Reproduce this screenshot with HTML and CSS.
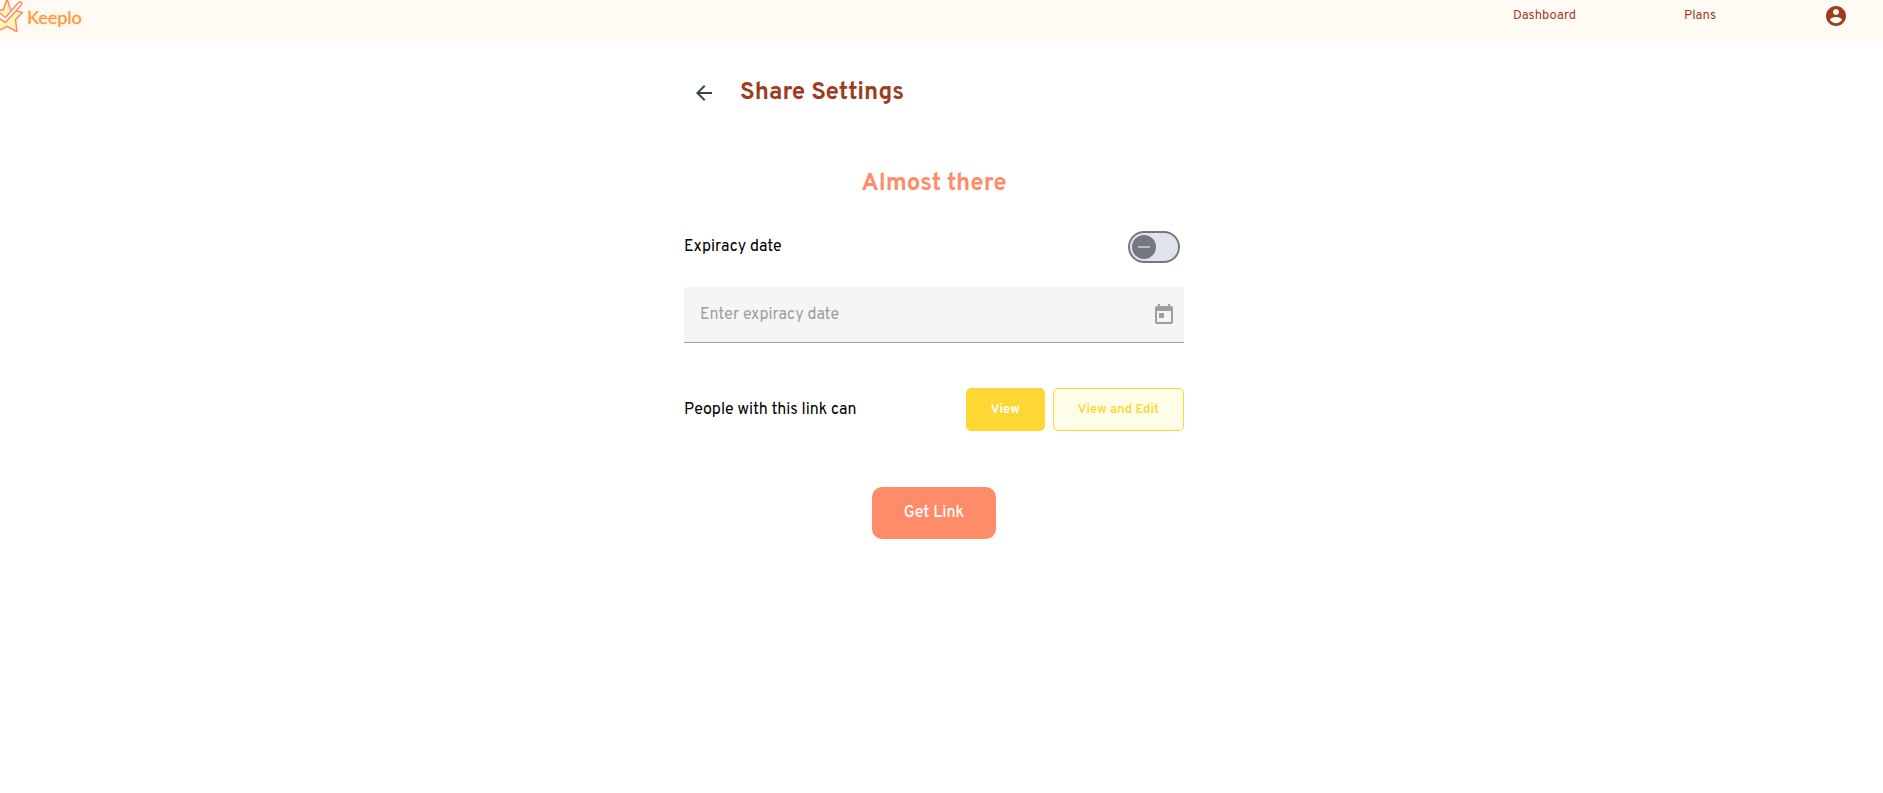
FILE: index.html
```html
<!DOCTYPE html>
<html lang="en">
<head>
<meta charset="utf-8">
<title>Keeplo - Share Settings</title>
<link rel="stylesheet" href="styles.css">
</head>
<body>
<header class="topbar">
  <a class="brand" href="#" aria-label="Keeplo home">
    <svg class="brand-mark" viewBox="0 0 24 34" width="24" height="34" aria-hidden="true">
      <path class="star" d="M7-1L10.500 9.500 22.500 12.500 15.500 19.500 17 31.500 7 26.500-3 31.500-1 20-8 12.500 3.500 9.500z"/>
      <path class="tick" d="M-3 13.500L.5 13.500 5.500 17.500 18.500 2.500Q20.500 1 21.500 2.500T20.500 6L5.500 22.500-3 17"/>
    </svg>
    <span class="brand-name">Keeplo</span>
  </a>
  <nav class="nav">
    <a class="nav-link" href="#">Dashboard</a>
    <a class="nav-link" href="#">Plans</a>
    <button class="account" type="button" aria-label="Account">
      <svg viewBox="0 0 24 24" width="24" height="24"><path d="M12 2C6.480 2 2 6.480 2 12s4.480 10 10 10 10-4.480 10-10S17.520 2 12 2zm0 3c1.660 0 3 1.340 3 3s-1.340 3-3 3-3-1.340-3-3 1.340-3 3-3zm0 14.200c-2.500 0-4.710-1.280-6-3.220.030-1.990 4-3.080 6-3.080 1.990 0 5.970 1.090 6 3.080-1.290 1.940-3.500 3.220-6 3.220z"/></svg>
    </button>
  </nav>
</header>
<main class="page">
  <div class="panel">
    <div class="title-row">
      <button class="back" type="button" aria-label="Back">
        <svg viewBox="0 0 24 24" width="24" height="24"><path d="M20 11H7.830l5.590-5.590L12 4l-8 8 8 8 1.410-1.410L7.830 13H20v-2z"/></svg>
      </button>
      <h1 class="title">Share Settings</h1>
    </div>
    <h2 class="subtitle">Almost there</h2>
    <form class="form">
      <div class="row">
        <label for="expiry-on">Expiracy date</label>
        <input class="switch" id="expiry-on" type="checkbox" role="switch">
      </div>
      <div class="field">
        <input class="field-input" type="text" placeholder="Enter expiracy date" aria-label="Enter expiracy date">
        <button class="field-icon" type="button" aria-label="Open calendar">
          <svg viewBox="0 0 24 24" width="24" height="24"><path d="M19 3h-1V1h-2v2H8V1H6v2H5c-1.110 0-1.990.900-1.990 2L3 19c0 1.100.890 2 2 2h14c1.100 0 2-.900 2-2V5c0-1.100-.900-2-2-2zm0 16H5V8h14v11zM7 10h5v5H7z"/></svg>
        </button>
      </div>
      <div class="row access">
        <span>People with this link can</span>
        <div class="choices">
          <button class="choice selected" type="button">View</button>
          <button class="choice" type="button">View and Edit</button>
        </div>
      </div>
      <button class="submit" type="button">Get Link</button>
    </form>
  </div>
</main>
</body>
</html>
```
FILE: styles.css
```css
* { box-sizing: border-box; }
body { margin: 0; background: #fff; color: #000; font: 16px/24px Overpass, Roboto, sans-serif; }
button { font: inherit; border: 0; padding: 0; background: none; cursor: pointer; }
svg { display: block; fill: currentColor; }
.topbar { display: flex; justify-content: space-between; align-items: flex-start; height: 41px; padding-right: 35px; background: #fffaf3; color: #9c3d1f; }
.brand { display: flex; gap: 3px; text-decoration: none; }
.brand-mark { fill: none; stroke: #ff8c69; stroke-width: 1.5; stroke-linejoin: round; }
.star { fill: #fff6b8; }
.tick { fill: #fffaf3; }
.brand-name { padding-top: 5px; color: #ff8c69; font: 18px/24px Lato, sans-serif; text-shadow: 0 0 2px #ffeb7a, 0 0 2px #ffeb7a; }
.nav { display: flex; align-items: center; gap: 108px; padding-top: 4px; font-size: 13px; }
.nav-link { color: inherit; text-decoration: none; }
.account { color: inherit; }
.page { display: flex; justify-content: center; padding: 32px 15px 32px 0; }
.panel { width: 100%; max-width: 500px; }
.title-row { display: flex; align-items: center; gap: 24px; padding-left: 8px; }
.back { color: #37474f; }
.title, .subtitle { margin: 0; font-size: 24px; line-height: 40px; font-weight: 700; }
.title { color: #9c3d1f; }
.subtitle { margin-top: 51px; color: #ff8c69; text-align: center; }
.form { display: flex; flex-direction: column; margin-top: 27px; }
.row { display: flex; justify-content: space-between; align-items: center; }
.switch { appearance: none; display: flex; align-items: center; width: 52px; height: 32px; margin: 0 4px 0 0; padding: 0 2px; border: 2px solid #74777f; border-radius: 16px; background: #e0e2ec; cursor: pointer; }
.switch::before { content: ""; width: 24px; height: 24px; border-radius: 50%; background: linear-gradient(#b9bbc3, #b9bbc3) center / 12px 2px no-repeat #74777f; }
.switch:checked { justify-content: flex-end; }
.field { display: flex; align-items: center; height: 56px; margin-top: 24px; padding: 0 8px 0 16px; border-bottom: 1px solid #9e9e9e; border-radius: 4px 4px 0 0; background: #f5f5f5; }
.field-input { flex: 1; min-width: 0; border: 0; padding: 0; outline: 0; background: none; font: inherit; }
.field-input::placeholder { color: #9e9e9e; opacity: 1; }
.field-icon { color: #9e9e9e; }
.access { margin-top: 45px; }
.choices { display: flex; gap: 8px; }
.choice { height: 43px; padding: 0 24px; border: 1px solid #fdd835; border-radius: 5px; background: #fffde7; color: #fdd835; font-size: 13px; font-weight: 600; }
.selected { background: #fdd835; color: #fff; }
.submit { align-self: center; height: 52px; margin-top: 56px; padding: 0 32px; border-radius: 10px; background: #ff8c69; color: #fff; font-weight: 500; }
```
